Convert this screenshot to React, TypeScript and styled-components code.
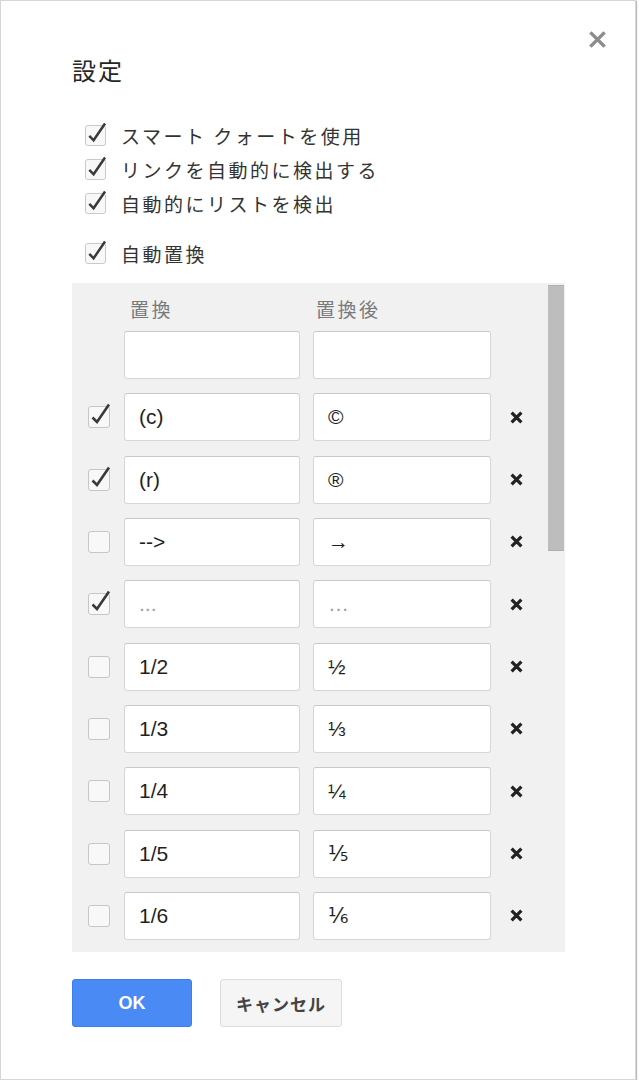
import React from "react";
import styled, { createGlobalStyle } from "styled-components";

const Global = createGlobalStyle`
  html, body { margin: 0; padding: 0; background: #fff; }
  body { font-family: "Liberation Sans", Arial, "Noto Sans CJK JP", sans-serif; color: #222; }
  * { box-sizing: border-box; }
`;

const Dialog = styled.div`
  position: relative;
  width: 636px;
  height: 1080px;
  border: 1px solid #d6d6d6;
  box-shadow: 1px 1px 1px #bdbdbd;
  background: #fff;
  padding: 55px 0 0 71px;
  display: flex;
  flex-direction: column;
`;

const CloseButton = styled.button`
  position: absolute;
  top: 28px;
  right: 28px;
  width: 20px;
  height: 20px;
  padding: 0;
  border: 0;
  background: transparent;
  display: flex;
  align-items: center;
  justify-content: center;
  cursor: pointer;
`;

const Title = styled.h1`
  margin: 0;
  font-family: "Noto Sans CJK JP", sans-serif;
  font-size: 24px;
  line-height: 28px;
  font-weight: 400;
  letter-spacing: 2px;
  color: #262626;
`;

const OptionList = styled.div`
  margin-top: 34px;
  display: flex;
  flex-direction: column;
`;

const OptionRow = styled.label<{ $gap?: number }>`
  height: 34px;
  margin-top: ${(p) => p.$gap ?? 0}px;
  padding-left: 13px;
  display: flex;
  align-items: center;
  gap: 15px;
  font-family: "Noto Sans CJK JP", sans-serif;
  font-size: 19px;
  letter-spacing: 2.5px;
  color: #333;
`;

const Panel = styled.div`
  margin-top: 13px;
  width: 493px;
  height: 669px;
  background: #f1f1f1;
  display: flex;
`;

const PanelBody = styled.div`
  flex: 1;
  overflow: hidden;
  padding: 12px 0 12px 16px;
`;

const Grid = styled.div`
  display: grid;
  grid-template-columns: 23px 176px 178px 24px;
  column-gap: 13px;
  align-items: center;
`;

const HeaderGrid = styled(Grid)`
  height: 24px;
  margin-bottom: 12px;
`;

const HeaderCell = styled.div<{ $indent: number }>`
  padding-left: ${(p) => p.$indent}px;
  font-family: "Noto Sans CJK JP", sans-serif;
  font-size: 19px;
  letter-spacing: 2.5px;
  color: #7a7a7a;
`;

const RowsGrid = styled(Grid)`
  grid-auto-rows: 48px;
  row-gap: 14.33px;
`;

const TextBox = styled.input<{ $muted?: boolean }>`
  width: 100%;
  height: 48px;
  border: 1px solid #d6d6d6;
  border-top-color: #c9c9c9;
  border-radius: 3px;
  background: #fff;
  padding: 0 14px;
  font-family: "Liberation Sans", Arial, "DejaVu Sans", sans-serif;
  font-size: 21px;
  color: ${(p) => (p.$muted ? "#9a9ea8" : "#1f1f1f")};
  outline: none;
`;

const DeleteButton = styled.button`
  width: 24px;
  height: 24px;
  padding: 0;
  border: 0;
  background: transparent;
  display: flex;
  align-items: center;
  justify-content: center;
  cursor: pointer;
`;

const ScrollTrack = styled.div`
  width: 17px;
  padding: 2px 1px 0 0;
`;

const ScrollThumb = styled.div`
  height: 266px;
  background: #bdbdbd;
  border-top: 1px solid #b0b0b0;
  border-bottom: 1px solid #b0b0b0;
`;

const Footer = styled.div`
  margin-top: 27px;
  display: flex;
  gap: 28px;
`;

const Button = styled.button<{ $primary?: boolean }>`
  height: 48px;
  width: ${(p) => (p.$primary ? 120 : 122)}px;
  border-radius: 3px;
  border: 1px solid ${(p) => (p.$primary ? "#3b7de9" : "#dcdcdc")};
  background: ${(p) => (p.$primary ? "#4a8af4" : "#f5f5f5")};
  color: ${(p) => (p.$primary ? "#fff" : "#444")};
  font-family: "Liberation Sans", Arial, "Noto Sans CJK JP", sans-serif;
  font-weight: 700;
  font-size: ${(p) => (p.$primary ? 18 : 17)}px;
  letter-spacing: ${(p) => (p.$primary ? 0 : 1)}px;
  padding: 0;
  cursor: pointer;
`;

const Check = ({ checked, size = 22 }: { checked: boolean; size?: number }) => (
  <svg width={size} height={size} viewBox="0 0 22 22" style={{ overflow: "visible", flexShrink: 0 }}>
    <rect x="0.5" y="0.5" width="21" height="21" rx="2.5" fill="#f8f8f8" stroke="#c6c6c6" />
    {checked && (
      <path d="M4.5 11.5 L9 16 L21 -1.5" fill="none" stroke="#3a3a3a" strokeWidth="2.6" strokeLinejoin="miter" />
    )}
  </svg>
);

const Cross = ({ size, color, width }: { size: number; color: string; width: number }) => (
  <svg width={size} height={size} viewBox="0 0 12 12">
    <path d="M1.5 1.5 L10.5 10.5 M10.5 1.5 L1.5 10.5" stroke={color} strokeWidth={width} strokeLinecap="butt" />
  </svg>
);

type Sub = { from: string; to: string; on: boolean; muted?: boolean };

const subs: Sub[] = [
  { from: "(c)", to: "©", on: true },
  { from: "(r)", to: "®", on: true },
  { from: "-->", to: "→", on: false },
  { from: "...", to: "…", on: true, muted: true },
  { from: "1/2", to: "½", on: false },
  { from: "1/3", to: "⅓", on: false },
  { from: "1/4", to: "¼", on: false },
  { from: "1/5", to: "⅕", on: false },
  { from: "1/6", to: "⅙", on: false },
  { from: "1/8", to: "⅛", on: false },
  { from: "2/3", to: "⅔", on: false },
];

const options = ["スマート クォートを使用", "リンクを自動的に検出する", "自動的にリストを検出"];

export default function App() {
  return (
    <>
      <Global />
      <Dialog>
        <CloseButton aria-label="閉じる">
          <Cross size={19} color="#8c8c8c" width={2.2} />
        </CloseButton>
        <Title>設定</Title>
        <OptionList>
          {options.map((o) => (
            <OptionRow key={o}>
              <Check checked size={21} />
              <span>{o}</span>
            </OptionRow>
          ))}
          <OptionRow $gap={16}>
            <Check checked size={21} />
            <span>自動置換</span>
          </OptionRow>
        </OptionList>
        <Panel>
          <PanelBody>
            <HeaderGrid>
              <div />
              <HeaderCell $indent={6}>置換</HeaderCell>
              <HeaderCell $indent={3}>置換後</HeaderCell>
              <div />
            </HeaderGrid>
            <RowsGrid>
              <div />
              <TextBox defaultValue="" />
              <TextBox defaultValue="" />
              <div />
              {subs.map((s) => (
                <React.Fragment key={s.from}>
                  <Check checked={s.on} />
                  <TextBox defaultValue={s.from} $muted={s.muted} readOnly />
                  <TextBox defaultValue={s.to} $muted={s.muted} readOnly />
                  <DeleteButton aria-label="削除">
                    <Cross size={13} color="#222" width={3} />
                  </DeleteButton>
                </React.Fragment>
              ))}
            </RowsGrid>
          </PanelBody>
          <ScrollTrack>
            <ScrollThumb />
          </ScrollTrack>
        </Panel>
        <Footer>
          <Button $primary>OK</Button>
          <Button>キャンセル</Button>
        </Footer>
      </Dialog>
    </>
  );
}
